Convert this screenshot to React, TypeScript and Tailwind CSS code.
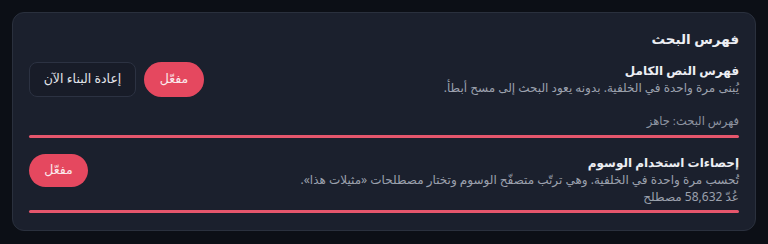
export default function App() {
  return (
    <div dir="rtl" className="min-h-screen bg-[#0c0f16] p-3 font-['Noto_Sans','DejaVu_Sans',sans-serif]">
      <div className="rounded-xl border border-[#2a303d] bg-[#1b202d] px-4 pt-4 pb-[17px]">
        <h2 className="text-[13.5px] font-bold leading-[21px] text-[#eceef3]">فهرس البحث</h2>

        {/* الفهرس النصي */}
        <div className="mt-3 flex items-start justify-between">
          <div className="text-[12px] leading-[17px]">
            <div className="font-bold text-[#eceef3]">فهرس النص الكامل</div>
            <div className="text-[#9ca1ad]">يُبنى مرة واحدة في الخلفية. بدونه يعود البحث إلى مسح أبطأ.</div>
          </div>
          <div className="flex items-center gap-2">
            <button className="h-[35px] w-[60px] rounded-full bg-[#e5485f] text-[12.5px] text-[#fbe9ec]">مفعّل</button>
            <button className="h-[35px] w-[107px] rounded-lg border border-[#2c3242] bg-[#181c28] text-[12.5px] text-[#e3e5ea]">
              إعادة البناء الآن
            </button>
          </div>
        </div>

        <div className="mt-[15px] text-[11.5px] leading-[18px] text-[#8d93a0]">فهرس البحث: جاهز</div>
        <div className="mt-[5px] h-[3px] rounded-full bg-[#e5566c]" />

        {/* إحصاءات الوسوم */}
        <div className="mt-4 flex items-start justify-between">
          <div className="text-[12px] leading-[17px]">
            <div className="font-bold text-[#eceef3]">إحصاءات استخدام الوسوم</div>
            <div className="text-[#9ca1ad]">تُحسب مرة واحدة في الخلفية. وهي ترتّب متصفّح الوسوم وتختار مصطلحات «مثيلات هذا».</div>
            <div className="text-[#9ca1ad]">عُدّ 58,632 مصطلح</div>
          </div>
          <button className="h-[33px] w-[59px] rounded-full bg-[#e5485f] text-[12.5px] text-[#fbe9ec]">مفعّل</button>
        </div>
        <div className="mt-[5px] h-[3px] rounded-full bg-[#e5566c]" />
      </div>
    </div>
  )
}
